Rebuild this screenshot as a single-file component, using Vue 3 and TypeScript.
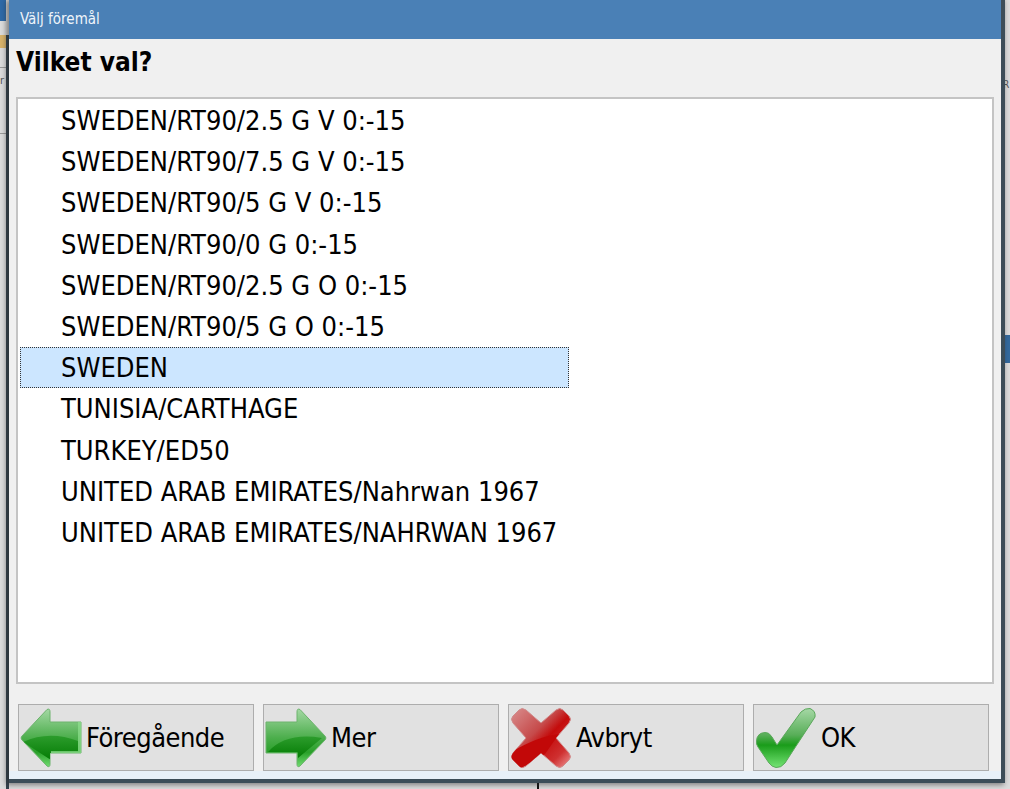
<script setup lang="ts">
const rows: string[] = [
  'SWEDEN/RT90/2.5 G V 0:-15',
  'SWEDEN/RT90/7.5 G V 0:-15',
  'SWEDEN/RT90/5 G V 0:-15',
  'SWEDEN/RT90/0 G 0:-15',
  'SWEDEN/RT90/2.5 G O 0:-15',
  'SWEDEN/RT90/5 G O 0:-15',
  'SWEDEN',
  'TUNISIA/CARTHAGE',
  'TURKEY/ED50',
  'UNITED ARAB EMIRATES/Nahrwan 1967',
  'UNITED ARAB EMIRATES/NAHRWAN 1967'
]
const selected = 6
</script>

<template>
  <div class="desktop">
    <div class="back">
      <div class="b-blue"></div>
      <div class="b-tan"></div>
      <div class="b-line l1"></div>
      <div class="b-line l2"></div>
      <div class="b-dark-left"></div>
      <span class="b-txt-l">r</span>
      <span class="b-txt-r">R</span>
      <div class="b-blue-r"></div>
      <div class="b-tick"></div>
    </div>
    <div class="dialog">
      <div class="titlebar">Välj föremål</div>
      <div class="heading">Vilket val?</div>
      <div class="listbox">
        <div
          v-for="(row, i) in rows"
          :key="row"
          class="row"
          :class="{ selected: i === selected }"
        >{{ row }}</div>
      </div>
      <div class="buttons">
        <button class="btn">
          <svg class="icon" viewBox="0 0 60 60">
            <defs>
              <linearGradient id="gl" x1="0" y1="0" x2="0" y2="1">
                <stop offset="0" stop-color="#a3d8a3" />
                <stop offset="0.5" stop-color="#4cae4c" />
                <stop offset="0.75" stop-color="#2aa02a" />
                <stop offset="1" stop-color="#70dc70" />
              </linearGradient>
              <linearGradient id="ll" x1="0" y1="0" x2="0" y2="1">
                <stop offset="0" stop-color="#2c9c2c" />
                <stop offset="1" stop-color="#047c04" />
              </linearGradient>
              <clipPath id="cl"><path d="M1 28 L26 1.500 Q29 0 29 4 V14 H60 V45 H29 V56 Q29 60 26 58 L1 32 Q-1 30 1 28 Z" /></clipPath>
            </defs>
            <path d="M1 28 L26 1.500 Q29 0 29 4 V14 H60 V45 H29 V56 Q29 60 26 58 L1 32 Q-1 30 1 28 Z" fill="url(#gl)" stroke="#6db36d" stroke-width="1" />
            <g clip-path="url(#cl)">
              <path d="M2 34 Q28 22 57 33 V44 H30 V52 Z" fill="url(#ll)" />
              <path d="M57 14 H60 V45 H30 V43 H57 Z" fill="#8fe08f" opacity="0.7" />
            </g>
          </svg>
          <span>Föregående</span>
        </button>
        <button class="btn">
          <svg class="icon" viewBox="0 0 60 60">
            <defs>
              <linearGradient id="gr" x1="0" y1="0" x2="0" y2="1">
                <stop offset="0" stop-color="#a3d8a3" />
                <stop offset="0.5" stop-color="#4cae4c" />
                <stop offset="0.75" stop-color="#2aa02a" />
                <stop offset="1" stop-color="#70dc70" />
              </linearGradient>
              <linearGradient id="lr" x1="0" y1="0" x2="0" y2="1">
                <stop offset="0" stop-color="#2c9c2c" />
                <stop offset="1" stop-color="#047c04" />
              </linearGradient>
              <clipPath id="cr"><path d="M59 28 L34 1.500 Q31 0 31 4 V14 H0 V45 H31 V56 Q31 60 34 58 L59 32 Q61 30 59 28 Z" /></clipPath>
            </defs>
            <path d="M59 28 L34 1.500 Q31 0 31 4 V14 H0 V45 H31 V56 Q31 60 34 58 L59 32 Q61 30 59 28 Z" fill="url(#gr)" stroke="#6db36d" stroke-width="1" />
            <g clip-path="url(#cr)">
              <path d="M2 44 Q20 24 56 30 L32 50 V44 Z" fill="url(#lr)" />
            </g>
          </svg>
          <span>Mer</span>
        </button>
        <button class="btn">
          <svg class="icon" viewBox="0 0 60 60">
            <defs>
              <linearGradient id="gx" x1="0" y1="0" x2="1" y2="1">
                <stop offset="0" stop-color="#d98e8e" />
                <stop offset="0.4" stop-color="#c64a4a" />
                <stop offset="0.55" stop-color="#c40c0c" />
                <stop offset="0.8" stop-color="#cf3030" />
                <stop offset="1" stop-color="#f09a9a" />
              </linearGradient>
              <clipPath id="cx"><path d="M2 8 L8 2 Q11 -1 15 2 L30 15 L45 2 Q49 -1 52 2 L58 8 Q61 11 58 15 L45 30 L58 45 Q61 49 58 52 L52 58 Q49 61 45 58 L30 45 L15 58 Q11 61 8 58 L2 52 Q-1 49 2 45 L15 30 L2 15 Q-1 11 2 8 Z" /></clipPath>
            </defs>
            <path d="M2 8 L8 2 Q11 -1 15 2 L30 15 L45 2 Q49 -1 52 2 L58 8 Q61 11 58 15 L45 30 L58 45 Q61 49 58 52 L52 58 Q49 61 45 58 L30 45 L15 58 Q11 61 8 58 L2 52 Q-1 49 2 45 L15 30 L2 15 Q-1 11 2 8 Z" fill="url(#gx)" stroke="#d08a8a" stroke-width="1" />
            <g clip-path="url(#cx)">
              <path d="M0 44 Q28 28 48 26 L34 46 L10 60 L0 56 Z" fill="#c20808" />
            </g>
          </svg>
          <span>Avbryt</span>
        </button>
        <button class="btn">
          <svg class="icon" viewBox="0 0 60 60">
            <defs>
              <linearGradient id="gc" x1="0" y1="0" x2="0" y2="1">
                <stop offset="0" stop-color="#a6d8a6" />
                <stop offset="0.45" stop-color="#58ae58" />
                <stop offset="0.62" stop-color="#1a9c1a" />
                <stop offset="1" stop-color="#74e474" />
              </linearGradient>
            </defs>
            <path d="M0.500 33 Q1 25 9 24.500 Q13 24 16 29 L21 37 L45 4 Q49 0 54 0.500 Q60 3 59 9 L29 55 Q25 60 20 59.500 Q16 59 13 55 L2 39 Q0 36 0.500 33 Z" fill="url(#gc)" stroke="#5aa85a" stroke-width="1" />
          </svg>
          <span>OK</span>
        </button>
      </div>
    </div>
  </div>
</template>

<style>
html, body { margin: 0; background: #d6d6d6; }
</style>

<style scoped>
.desktop {
  position: relative;
  width: 1010px;
  height: 789px;
  overflow: hidden;
  padding-left: 9px;
  box-sizing: border-box;
  background: #dcdcdc;
  font-family: "DejaVu Sans", sans-serif;
  font-stretch: condensed;
}
.back div, .back span { position: absolute; }
.b-blue { left: 0; top: 0; width: 6px; height: 21px; background: #2f6aa8; }
.b-tan { left: 0; top: 35px; width: 6px; height: 13px; background: #d9b36a; }
.b-line { left: 0; width: 6px; height: 1px; background: #9a9a9a; }
.l1 { top: 67px; }
.l2 { top: 133px; }
.b-dark-left { left: 6px; top: 35px; width: 3px; height: 754px; background: #33424d; }
.b-txt-l { left: 0; top: 74px; font-size: 11px; line-height: 14px; color: #555; }
.b-txt-r { left: 1003px; top: 78px; font-size: 10px; line-height: 14px; color: #555; }
.b-blue-r { right: 0; top: 335px; width: 5px; height: 28px; background: #336a9e; }
.b-tick { left: 537px; top: 783px; width: 2px; height: 6px; background: #111; }
.dialog {
  position: relative;
  width: 992px;
  height: 779px;
  background: linear-gradient(#f0f0f0 771px, #e8f1f9 771px);
  box-shadow: 2px 2px 0 2px #3c4d58, 0 3px 5px 3px rgba(40, 40, 40, 0.5);
  display: flex;
  flex-direction: column;
}
.titlebar {
  height: 39px;
  flex: none;
  background: #4a80b6;
  color: #eef4fa;
  font-size: 15px;
  line-height: 39px;
  padding-left: 11px;
}
.heading {
  height: 58px;
  flex: none;
  box-sizing: border-box;
  padding: 8px 0 0 7px;
  font-size: 26px;
  line-height: 30px;
  font-weight: 700;
  color: #000;
}
.listbox {
  width: 978px;
  height: 587px;
  margin-left: 7px;
  box-sizing: border-box;
  background: #fff;
  border: 2px solid #c4c4c4;
  padding: 1px 0 0 2px;
  flex: none;
}
.row {
  width: 549px;
  height: 41.2px;
  line-height: 41.2px;
  padding-left: 41px;
  box-sizing: border-box;
  font-size: 27px;
  color: #000;
  white-space: nowrap;
}
.row.selected {
  background: #cce6ff;
  outline: 1px dotted #333;
  outline-offset: -1px;
}
.buttons {
  display: flex;
  gap: 9px;
  margin: 20px 0 0 9px;
}
.btn {
  width: 236px;
  height: 67px;
  display: flex;
  align-items: center;
  gap: 5px;
  padding: 0 0 0 2px;
  box-sizing: border-box;
  background: #e1e1e1;
  border: 1px solid #adadad;
  font: inherit;
  font-stretch: condensed;
  font-size: 27px;
  letter-spacing: -0.5px;
  color: #000;
}
.icon {
  width: 60px;
  height: 60px;
  flex: none;
  overflow: visible;
}
</style>
